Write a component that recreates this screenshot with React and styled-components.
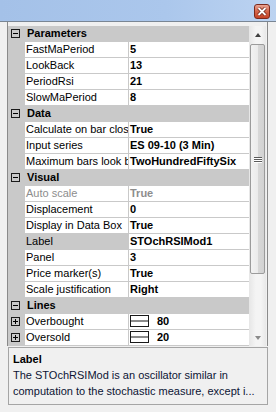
import React from 'react';
import styled, { createGlobalStyle } from 'styled-components';

const GlobalStyle = createGlobalStyle`
    html, body {
        margin: 0;
        padding: 0;
        background: #f0f0f0;
    }
    body {
        font-family: "Liberation Sans", Arial, sans-serif;
        font-size: 11px;
    }
`;

const Window = styled.div`
    width: 276px;
    height: 412px;
    display: flex;
    flex-direction: column;
    background: #f0f0f0;
    overflow: hidden;
`;

const TitleBar = styled.div`
    height: 22px;
    display: flex;
    justify-content: flex-end;
    align-items: flex-start;
    padding: 4px 6px 0 0;
    box-sizing: border-box;
    background: linear-gradient(90deg, #a4c1e8 0%, #abc7ec 60%, #bcd3f1 100%);
    border-bottom: 1px solid #7a8694;
`;

const CloseButton = styled.div`
    width: 16px;
    height: 15px;
    box-sizing: border-box;
    border: 1px solid #7c2a1c;
    border-radius: 3px;
    background: linear-gradient(180deg, #e9a493 0%, #d4664b 50%, #c44326 100%);
    display: flex;
    align-items: center;
    justify-content: center;
`;

const Body = styled.div`
    flex: 1;
    display: flex;
    flex-direction: column;
    padding: 0 8px 0 7px;
`;

const GridFrame = styled.div`
    display: flex;
    padding: 4px 1px 0 0;
    border-left: 1px solid #8a8a8a;
    border-right: 1px solid #8a8a8a;
`;

const Grid = styled.div`
    width: 241px;
    display: flex;
    flex-direction: column;
    background: #c9c9c9;
`;

const Row = styled.div`
    display: flex;
    height: 16px;
`;

const Gutter = styled.div`
    width: 17px;
    flex: none;
    display: flex;
    align-items: center;
    padding-left: 3px;
    box-sizing: border-box;
    background: #c9c9c9;
`;

const CategoryTitle = styled.div`
    flex: 1;
    font-weight: bold;
    line-height: 15px;
    padding-left: 2px;
    color: #000;
`;

const NameCell = styled.div`
    width: 104px;
    flex: none;
    box-sizing: border-box;
    padding-left: 1px;
    line-height: 15px;
    white-space: nowrap;
    overflow: hidden;
    background: ${(props) => (props.selected ? '#c9c9c9' : '#ffffff')};
    color: ${(props) => (props.disabled ? '#8d8d8d' : '#000')};
    border-bottom: 1px solid #c9c9c9;
    border-right: 1px solid #c9c9c9;
`;

const ValueCell = styled.div`
    flex: 1;
    display: flex;
    align-items: center;
    gap: 8px;
    box-sizing: border-box;
    padding-left: 1px;
    line-height: 15px;
    white-space: nowrap;
    overflow: hidden;
    font-weight: bold;
    background: #ffffff;
    color: ${(props) => (props.disabled ? '#8d8d8d' : '#000')};
    border-bottom: 1px solid #c9c9c9;
`;

const Expander = styled.div`
    width: 9px;
    height: 9px;
    box-sizing: border-box;
    border: 1px solid #1a1a1a;
    position: relative;
    margin-top: -1px;

    &::before {
        content: '';
        position: absolute;
        left: 1px;
        top: 3px;
        width: 5px;
        height: 1px;
        background: #000;
    }

    &::after {
        content: '';
        display: ${(props) => (props.collapsed ? 'block' : 'none')};
        position: absolute;
        left: 3px;
        top: 1px;
        width: 1px;
        height: 5px;
        background: #000;
    }
`;

const LineSwatch = styled.div`
    width: 19px;
    height: 12px;
    box-sizing: border-box;
    border: 1px solid #1a1a1a;
    display: flex;
    align-items: center;
    flex: none;
    margin-top: -1px;

    &::before {
        content: '';
        flex: 1;
        height: 2px;
        background: #8a8a8a;
    }
`;

const ScrollBar = styled.div`
    width: 17px;
    flex: none;
    display: flex;
    flex-direction: column;
    background: linear-gradient(90deg, #e6e6e6 0%, #f4f4f4 40%, #f4f4f4 70%, #e8e8e8 100%);
`;

const ArrowButton = styled.div`
    height: 17px;
    display: flex;
    align-items: center;
    justify-content: center;

    &::before {
        content: '';
        width: 0;
        height: 0;
        border-left: 3.5px solid transparent;
        border-right: 3.5px solid transparent;
        ${(props) => (props.down
            ? 'border-top: 4px solid #8a8a8a;'
            : 'border-bottom: 4px solid #404040;')}
    }
`;

const Track = styled.div`
    flex: 1;
    display: flex;
    flex-direction: column;
    padding: 1px 1px 0 1px;
`;

const Thumb = styled.div`
    height: 230px;
    box-sizing: border-box;
    border: 1px solid #9b9b9b;
    border-radius: 2px;
    background: linear-gradient(90deg, #f2f2f2 0%, #ebebeb 50%, #d8d8d8 51%, #d2d2d2 100%);
    display: flex;
    flex-direction: column;
    align-items: center;
    justify-content: center;
    gap: 1px;
`;

const Grip = styled.div`
    width: 8px;
    height: 1px;
    background: #5a5a5a;
    box-shadow: 0 1px 0 #ffffff;
`;

const Description = styled.div`
    margin: 1px 0 0 1px;
    height: 58px;
    box-sizing: border-box;
    border: 1px solid #a5a5a5;
    padding: 3px 4px 0 4px;
    line-height: 16px;
    color: #0c1434;
    background: #f0f0f0;
`;

const DescTitle = styled.div`
    font-weight: bold;
    color: #000;
`;

const sections = [
    {
        title: 'Parameters',
        rows: [
            { name: 'FastMaPeriod', value: '5' },
            { name: 'LookBack', value: '13' },
            { name: 'PeriodRsi', value: '21' },
            { name: 'SlowMaPeriod', value: '8' },
        ],
    },
    {
        title: 'Data',
        rows: [
            { name: 'Calculate on bar close', value: 'True' },
            { name: 'Input series', value: 'ES 09-10 (3 Min)' },
            { name: 'Maximum bars look back', value: 'TwoHundredFiftySix' },
        ],
    },
    {
        title: 'Visual',
        rows: [
            { name: 'Auto scale', value: 'True', disabled: true },
            { name: 'Displacement', value: '0' },
            { name: 'Display in Data Box', value: 'True' },
            { name: 'Label', value: 'STOchRSIMod1', selected: true },
            { name: 'Panel', value: '3' },
            { name: 'Price marker(s)', value: 'True' },
            { name: 'Scale justification', value: 'Right' },
        ],
    },
    {
        title: 'Lines',
        rows: [
            { name: 'Overbought', value: '80', line: true },
            { name: 'Oversold', value: '20', line: true },
        ],
    },
];

const CloseIcon = () => (
    <svg width="10" height="9" viewBox="0 0 10 9">
        <path d="M1.5 1 L8.5 8 M8.5 1 L1.5 8" stroke="#6b2316" strokeWidth="3.4" />
        <path d="M1.5 1 L8.5 8 M8.5 1 L1.5 8" stroke="#ffffff" strokeWidth="1.8" />
    </svg>
);

const PropertyRow = ({ row }) => (
    <Row>
        <Gutter>{row.line && <Expander collapsed />}</Gutter>
        <NameCell selected={row.selected} disabled={row.disabled}>{row.name}</NameCell>
        <ValueCell disabled={row.disabled}>
            {row.line && <LineSwatch />}
            {row.value}
        </ValueCell>
    </Row>
);

const App = () => (
    <Window>
        <GlobalStyle />
        <TitleBar>
            <CloseButton>
                <CloseIcon />
            </CloseButton>
        </TitleBar>
        <Body>
            <GridFrame>
                <Grid>
                    {sections.map((section) => (
                        <React.Fragment key={section.title}>
                            <Row>
                                <Gutter><Expander /></Gutter>
                                <CategoryTitle>{section.title}</CategoryTitle>
                            </Row>
                            {section.rows.map((row) => (
                                <PropertyRow key={row.name} row={row} />
                            ))}
                        </React.Fragment>
                    ))}
                </Grid>
                <ScrollBar>
                    <ArrowButton />
                    <Track>
                        <Thumb>
                            <Grip />
                            <Grip />
                            <Grip />
                        </Thumb>
                    </Track>
                    <ArrowButton down />
                </ScrollBar>
            </GridFrame>
            <Description>
                <DescTitle>Label</DescTitle>
                <div>The STOchRSIMod is an oscillator similar in</div>
                <div>computation to the stochastic measure, except i...</div>
            </Description>
        </Body>
    </Window>
);

export default App;
